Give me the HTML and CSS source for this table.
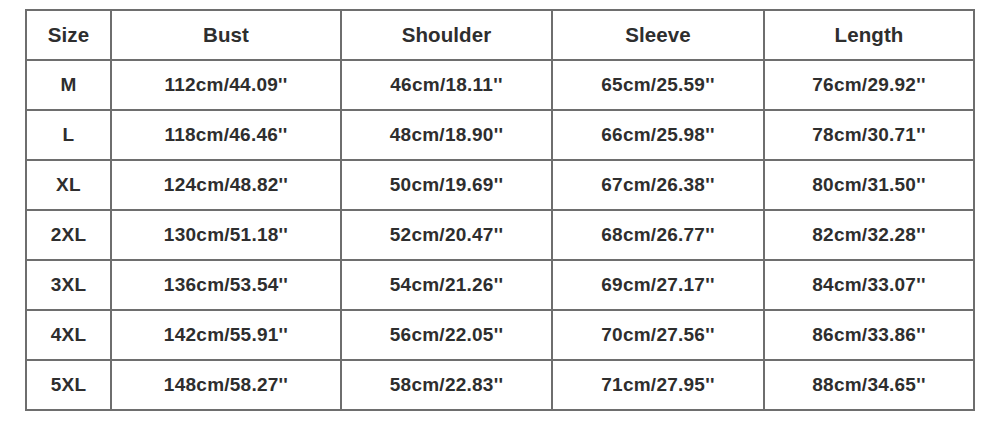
FILE: index.html
```html
<!DOCTYPE html>
<html>
<head>
<meta charset="utf-8">
<link rel="stylesheet" href="styles.css">
</head>
<body>
<div class="wrap">
<table class="size-table">
<colgroup>
<col class="c-size"><col class="c-bust"><col class="c-shoulder"><col class="c-sleeve"><col class="c-length">
</colgroup>
<thead>
<tr><th>Size</th><th>Bust</th><th>Shoulder</th><th>Sleeve</th><th>Length</th></tr>
</thead>
<tbody>
<tr><td>M</td><td>112cm/44.09''</td><td>46cm/18.11''</td><td>65cm/25.59''</td><td>76cm/29.92''</td></tr>
<tr><td>L</td><td>118cm/46.46''</td><td>48cm/18.90''</td><td>66cm/25.98''</td><td>78cm/30.71''</td></tr>
<tr><td>XL</td><td>124cm/48.82''</td><td>50cm/19.69''</td><td>67cm/26.38''</td><td>80cm/31.50''</td></tr>
<tr><td>2XL</td><td>130cm/51.18''</td><td>52cm/20.47''</td><td>68cm/26.77''</td><td>82cm/32.28''</td></tr>
<tr><td>3XL</td><td>136cm/53.54''</td><td>54cm/21.26''</td><td>69cm/27.17''</td><td>84cm/33.07''</td></tr>
<tr><td>4XL</td><td>142cm/55.91''</td><td>56cm/22.05''</td><td>70cm/27.56''</td><td>86cm/33.86''</td></tr>
<tr><td>5XL</td><td>148cm/58.27''</td><td>58cm/22.83''</td><td>71cm/27.95''</td><td>88cm/34.65''</td></tr>
</tbody>
</table>
</div>
</body>
</html>
```
FILE: styles.css
```css
html, body {
  margin: 0;
  padding: 0;
  background: #fff;
}
.wrap {
  padding: 9px 0 0 25px;
}
.size-table {
  border-collapse: collapse;
  table-layout: fixed;
  width: 950px;
  font-family: "Liberation Sans", Arial, sans-serif;
  font-weight: bold;
  font-size: 19px;
  letter-spacing: 0.25px;
  color: #2e2e2e;
}
.c-size { width: 85px; }
.c-bust { width: 230px; }
.c-shoulder { width: 211px; }
.c-sleeve { width: 212px; }
.c-length { width: 210px; }
.size-table th,
.size-table td {
  border: 2px solid #6e6e6e;
  height: 48px;
  padding: 0;
  text-align: center;
  vertical-align: middle;
  font-weight: bold;
}
.size-table th {
  font-size: 20.5px;
  letter-spacing: 0.1px;
}
```
